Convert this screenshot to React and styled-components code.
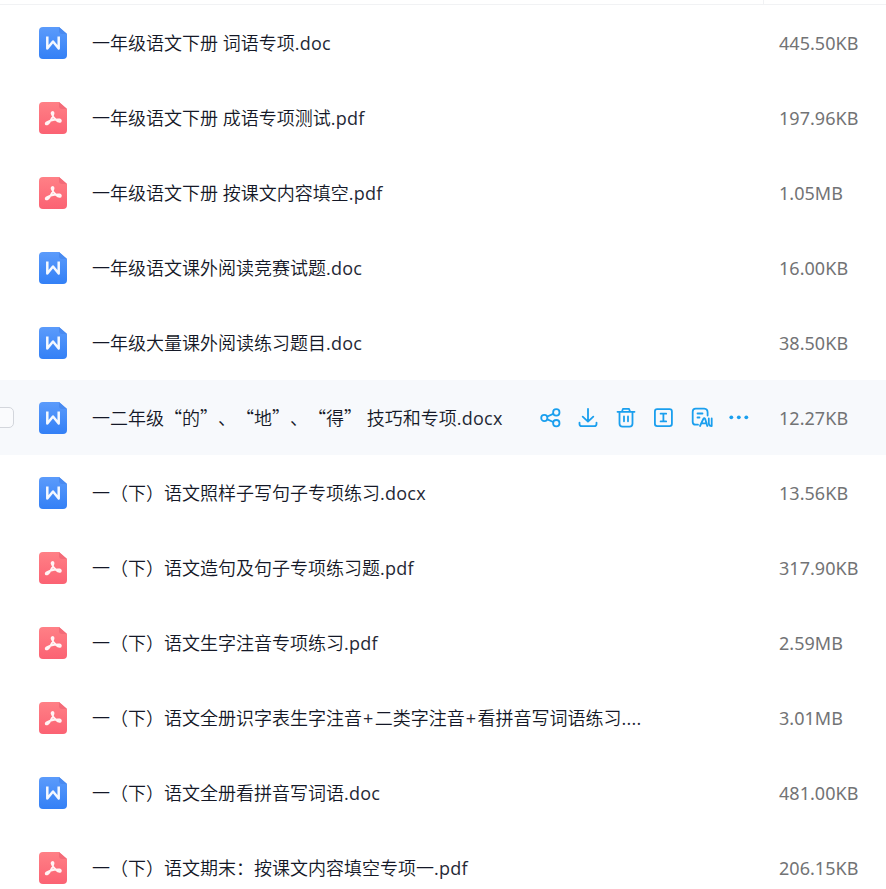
import React from "react";
import styled, { createGlobalStyle } from "styled-components";

const GlobalStyle = createGlobalStyle`
  body { margin: 0; background: #fff; overflow: hidden; }
  * { box-sizing: border-box; }
`;

const Page = styled.main`
  width: 886px;
  height: 889px;
  overflow: hidden;
  background: #fff;
`;

const HeaderEdge = styled.div`
  display: flex;
  height: 5px;
  border-bottom: 1px solid #f1f2f4;
`;

const HeaderCell = styled.div`
  width: ${(p) => p.$width}px;
  border-right: 1px solid #f1f2f4;
`;

const Row = styled.div`
  display: flex;
  align-items: center;
  height: 75px;
  background: ${(p) => (p.$active ? "#f7f9fc" : "#fff")};
`;

const CheckSlot = styled.div`
  flex: none;
  width: 39px;
  height: 21px;
  display: flex;
`;

const Checkbox = styled.div`
  width: 21px;
  height: 21px;
  margin-left: -7px;
  border: 1px solid #d3d6dc;
  border-radius: 5px;
  background: #fafbfd;
`;

const FileIcon = styled.svg`
  flex: none;
  width: 28px;
  height: 32px;
  margin-right: 25px;
`;

const NameCell = styled.div`
  display: flex;
  align-items: center;
  width: 687px;
  flex: none;
`;

const Name = styled.span`
  font: 350 18px/24px "Noto Sans", "Noto Sans CJK SC", sans-serif;
  color: #141827;
  white-space: pre;
  text-spacing-trim: space-all;
`;

const Latin = styled.span`
  font-family: "Open Sans", "Noto Sans", sans-serif;
  font-weight: 400;
  letter-spacing: 0.25px;
  color: #252936;
`;

const Plus = styled(Latin)`
  margin: 0 1.1px;
`;

const Quote = styled.span`
  font-family: "Noto Sans CJK SC", sans-serif;
`;

const Size = styled.span`
  font: 400 18px/24px "Noto Sans", sans-serif;
  letter-spacing: 0.04px;
  color: #727375;
`;

const Actions = styled.div`
  display: flex;
  align-items: center;
  margin-left: 36px;
  gap: 13.8px;
  color: #1a9fee;
`;

const ActionIcon = styled.svg`
  width: 24px;
  height: 24px;
  fill: none;
  stroke: currentColor;
  stroke-width: 1.8;
  stroke-linecap: round;
  stroke-linejoin: round;
`;

function DocIcon() {
  return (
    <FileIcon viewBox="0 0 28 32">
      <defs>
        <linearGradient id="doc" x1="0" y1="0" x2="0" y2="1">
          <stop stopColor="#5b9bfb" />
          <stop offset="1" stopColor="#3380f6" />
        </linearGradient>
      </defs>
      <path d="M4 0H20L28 7V28Q28 32 24 32H4Q0 32 0 28V4Q0 0 4 0Z" fill="url(#doc)" />
      <path d="M20 0L28 7H23Q20 7 20 4Z" fill="#498af0" />
      <path d="M8.3 9.5V21.5L14 14.5L19.7 21.5V9.5" fill="none" stroke="#f5f9ff" strokeWidth="2.5" strokeLinejoin="round" />
    </FileIcon>
  );
}

function PdfIcon() {
  return (
    <FileIcon viewBox="0 0 28 32">
      <defs>
        <linearGradient id="pdf" x1="0" y1="0" x2="0" y2="1">
          <stop stopColor="#ff8086" />
          <stop offset="1" stopColor="#fb6273" />
        </linearGradient>
      </defs>
      <path d="M4 0H20L28 7V28Q28 32 24 32H4Q0 32 0 28V4Q0 0 4 0Z" fill="url(#pdf)" />
      <path d="M20 0L28 7H23Q20 7 20 4Z" fill="#f36b78" />
      <path
        d="M13 10.3Q14.6 9.4 14.5 11.7Q14 15.2 10.8 19.7Q8.3 23.4 6.8 22Q6 20.5 10.8 18.8Q16.5 17.2 20.5 17.5Q22.6 18.1 21.5 19.6Q19.6 20.4 16.8 17.8Q13.4 14.7 12.6 11.6Q12.5 10.7 13 10.3Z"
        fill="none" stroke="#fff5f5" strokeWidth="1.85" strokeLinejoin="round"
      />
    </FileIcon>
  );
}

function RowActions() {
  return (
    <Actions>
      <ActionIcon viewBox="0 0 24 24">
        <circle cx="5.3" cy="12" r="3.1" />
        <circle cx="17.3" cy="6.4" r="3.2" />
        <circle cx="17.3" cy="17.2" r="3.2" />
        <path d="M8.4 10.5L14.2 7.9M8.4 13.4L14.2 16" />
      </ActionIcon>
      <ActionIcon viewBox="0 0 24 24">
        <path d="M12 2.8V15.5M6.7 10.7L12 15.7L17.3 10.7M3.5 16.6V18Q3.5 20.2 5.8 20.2H18.2Q20.5 20.2 20.5 18V16.6" />
      </ActionIcon>
      <ActionIcon viewBox="0 0 24 24">
        <path d="M3.5 5.8H20.5M8 5.5L9 2.8H15L16 5.5M5.5 6.2V17.5Q5.5 20.7 8.5 20.7H15.5Q18.5 20.7 18.5 17.5V6.2M10 10.5V15.3M14 10.5V15.3" />
      </ActionIcon>
      <ActionIcon viewBox="0 0 24 24">
        <rect x="2.9" y="3.1" width="17" height="17" rx="2.3" />
        <path d="M8.6 7.7H14.2M11.4 7.7V15.4M8.6 15.4H14.2" />
      </ActionIcon>
      <ActionIcon viewBox="0 0 24 24">
        <path d="M8 18.7H5.5Q2.7 18.7 2.7 16V5.7Q2.7 2.7 5.7 2.7H14.2Q17.6 3 17.6 6.5V9.5M7.5 7.5H12.5M7.5 11.5H9.5M10 20L13.3 13Q14.2 11.5 15.2 13L17.3 20M12 17.3H16.7M18.8 12.5V17.2Q18.8 20 21.7 20V12.5" />
      </ActionIcon>
      <ActionIcon viewBox="0 0 24 24">
        <g fill="currentColor" stroke="none">
          <circle cx="3.3" cy="11.3" r="1.9" />
          <circle cx="10.8" cy="11.3" r="1.9" />
          <circle cx="18.3" cy="11.3" r="1.9" />
        </g>
      </ActionIcon>
    </Actions>
  );
}

const files = [
  ["一年级语文下册 词语专项.doc", "445.50KB"],
  ["一年级语文下册 成语专项测试.pdf", "197.96KB"],
  ["一年级语文下册 按课文内容填空.pdf", "1.05MB"],
  ["一年级语文课外阅读竞赛试题.doc", "16.00KB"],
  ["一年级大量课外阅读练习题目.doc", "38.50KB"],
  ["一二年级“的”、“地”、“得” 技巧和专项.docx", "12.27KB", true],
  ["一（下）语文照样子写句子专项练习.docx", "13.56KB"],
  ["一（下）语文造句及句子专项练习题.pdf", "317.90KB"],
  ["一（下）语文生字注音专项练习.pdf", "2.59MB"],
  ["一（下）语文全册识字表生字注音+二类字注音+看拼音写词语练习....", "3.01MB", false, "pdf"],
  ["一（下）语文全册看拼音写词语.doc", "481.00KB"],
  ["一（下）语文期末：按课文内容填空专项一.pdf", "206.15KB"],
];

function FileName({ text }) {
  return (
    <Name>
      {text.split(/([“”+]|[.a-z]+)/).map((part, i) => {
        if (/^[“”]$/.test(part)) return <Quote key={i}>{part}</Quote>;
        if (part === "+") return <Plus key={i}>{part}</Plus>;
        if (/^[.a-z]+$/.test(part)) return <Latin key={i}>{part}</Latin>;
        return part;
      })}
    </Name>
  );
}

export default function App() {
  return (
    <Page>
      <GlobalStyle />
      <HeaderEdge>
        <HeaderCell $width={764} />
      </HeaderEdge>
      {files.map(([name, size, active, type]) => (
        <Row key={name} $active={active}>
          <CheckSlot>{active && <Checkbox />}</CheckSlot>
          {type === "pdf" || name.endsWith(".pdf") ? <PdfIcon /> : <DocIcon />}
          <NameCell>
            <FileName text={name} />
            {active && <RowActions />}
          </NameCell>
          <Size>{size}</Size>
        </Row>
      ))}
    </Page>
  );
}
